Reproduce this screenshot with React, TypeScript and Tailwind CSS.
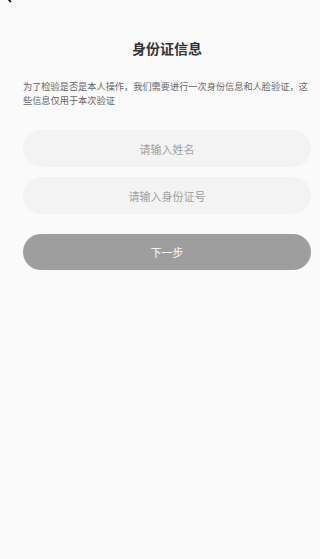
import React from 'react';

export default function App() {
  return (
    <div
      className="relative min-h-[559px] w-full bg-[#fafafa] overflow-hidden"
      style={{ fontFamily: '"Noto Sans CJK SC", "Noto Sans", sans-serif' }}
    >
      {/* back arrow, scrolled mostly out of view */}
      <svg
        className="absolute left-[3px] top-[-9px]"
        width="12"
        height="12"
        viewBox="0 0 12 12"
        fill="none"
      >
        <path d="M8 1L3 6l5 5" stroke="#222" strokeWidth="1.8" />
      </svg>

      <div className="flex flex-col pl-[23px] pr-[9px] pt-[37px]">
        <h1 className="text-center text-[14px] font-bold leading-[22px] text-[#333]">身份证信息</h1>

        <p className="mt-[20px] text-[9.2px] leading-[14px] text-[#666]">
          为了检验是否是本人操作，我们需要进行一次身份信息和人脸验证，这些信息仅用于本次验证
        </p>

        <div className="mt-[23px] flex flex-col gap-[10px]">
          <input
            className="h-[37px] w-full rounded-full bg-[#f3f3f3] text-center text-[11px] text-[#333] outline-none placeholder:text-[#a0a0a0]"
            placeholder="请输入姓名"
          />
          <input
            className="h-[37px] w-full rounded-full bg-[#f3f3f3] text-center text-[11px] text-[#333] outline-none placeholder:text-[#a0a0a0]"
            placeholder="请输入身份证号"
          />
        </div>

        <button className="mt-[20px] h-[36px] w-full rounded-full bg-[#9e9e9e] text-[11px] text-white">
          下一步
        </button>
      </div>
    </div>
  );
}
